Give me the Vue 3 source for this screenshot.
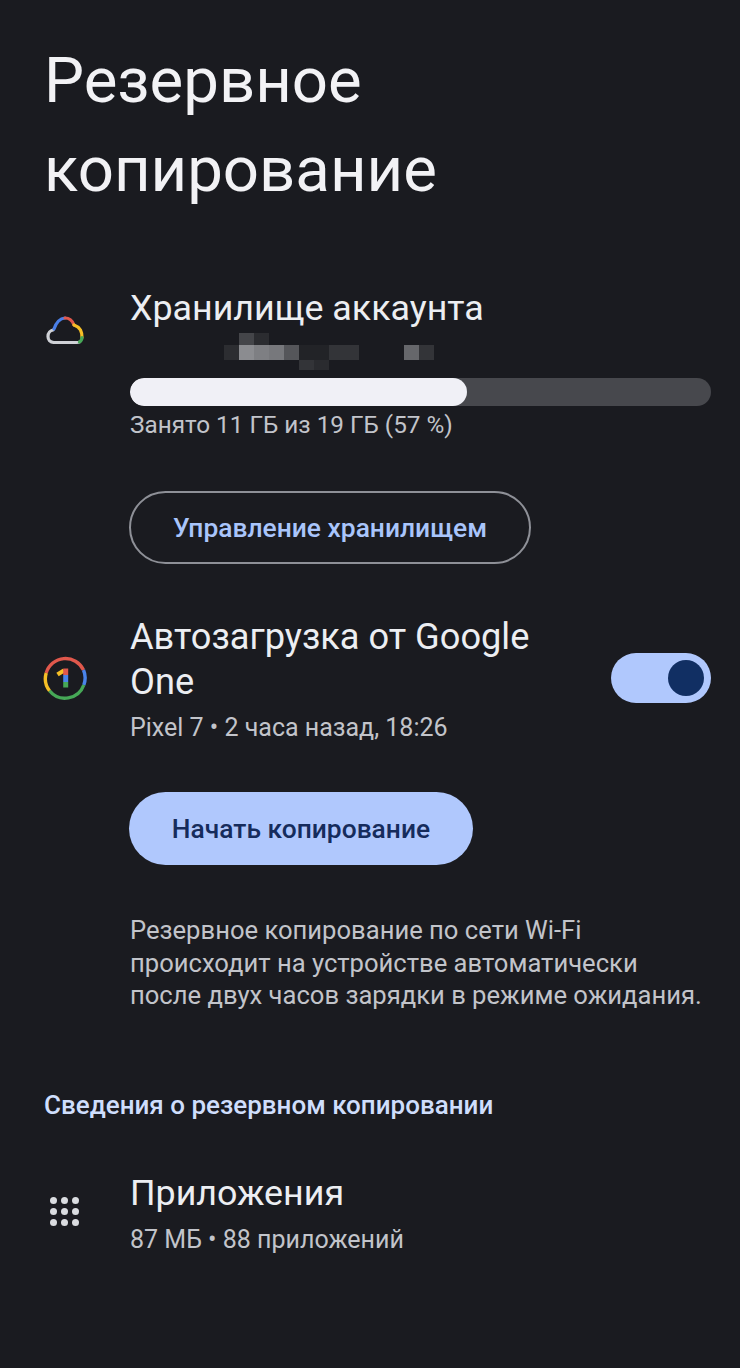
<template>
  <div class="page">
    <h1 class="title">Резервное<br />копирование</h1>

    <section class="row storage">
      <div class="icon-col">
        <svg width="38" height="30" viewBox="0 0 38 30" fill="none" stroke-width="3.2" stroke-linecap="round">
          <path d="M8 27.5 H30.5 C32 27.5 33 27.3 33.5 27" stroke="#cfd1d6" />
          <path d="M8 27.5 C4 27.5 2 24.5 2 21.5 C2 18 4.5 15.5 7 15" stroke="#cfd1d6" />
          <path d="M8 14 C10 8 14 3.5 19 3" stroke="#4a7fe8" />
          <path d="M19 3 C23.5 3 26.5 6 28 10" stroke="#e0584c" />
          <path d="M28 10 C31 11 33 12.5 34.5 15 C35.8 17.5 36 20 36 22.5" stroke="#f6bf26" />
          <path d="M36 22.5 C36 24.5 35 26 33.5 27" stroke="#46a857" />
        </svg>
      </div>
      <div class="body">
        <div class="row-title">Хранилище аккаунта</div>
        <div class="mosaic">
          <div v-for="(c, i) in mosaic" :key="i" :style="{ background: c }"></div>
        </div>
        <div class="bar"><div class="bar-fill" :style="{ width: used + '%' }"></div></div>
        <div class="sub bar-label">Занято 11 ГБ из 19 ГБ (57 %)</div>
        <button class="btn outline">Управление хранилищем</button>
      </div>
    </section>

    <section class="row backup">
      <div class="icon-col">
        <svg width="46" height="46" viewBox="0 0 46 46" fill="none" stroke-width="3.4">
          <path d="M4.2 18 A20 20 0 0 1 41.5 15" stroke="#e0584c" />
          <path d="M41.5 15 A20 20 0 0 1 41.8 30" stroke="#4a84ea" />
          <path d="M41.8 30 A20 20 0 0 1 7.5 35.8" stroke="#46a857" />
          <path d="M7.5 35.8 A20 20 0 0 1 4.2 18" stroke="#f6bf26" />
          <path d="M15.5 19.5 L22 15.5" stroke="#f6bf26" stroke-width="4.4" />
          <path d="M23.7 13.5 V20" stroke="#e0584c" stroke-width="5" />
          <path d="M23.7 20 V27" stroke="#4a84ea" stroke-width="5" />
          <path d="M23.7 27 V32.5" stroke="#46a857" stroke-width="5" />
        </svg>
      </div>
      <div class="body">
        <div class="toggle-row">
          <div>
            <div class="row-title wrap">Автозагрузка от Google One</div>
            <div class="sub below">Pixel 7 • 2 часа назад, 18:26</div>
          </div>
          <div class="toggle"><div class="knob"></div></div>
        </div>
        <button class="btn filled">Начать копирование</button>
        <p class="note">Резервное копирование по сети Wi-Fi происходит на устройстве автоматически после двух часов зарядки в режиме ожидания.</p>
      </div>
    </section>

    <div class="section-head">Сведения о резервном копировании</div>

    <section class="row apps">
      <div class="icon-col">
        <div class="dots"><span v-for="n in 9" :key="n"></span></div>
      </div>
      <div class="body">
        <div class="row-title">Приложения</div>
        <div class="sub below">87 МБ • 88 приложений</div>
      </div>
    </section>
  </div>
</template>

<script setup>
const used = 58

// blurred account e-mail, one colour per cell (3 rows of 14)
const e = 'transparent'
const mosaic = [
  e, '#444549', '#2b2c30', e, e, e, e, e, e, e, e, e, e, e,
  '#2c2d31', '#8b8c90', '#7e7f83', '#77787c', '#55565a', '#222327', '#222327', '#333438', '#333438', e, e, e, '#66676b', '#333438',
  e, e, e, e, e, '#333438', '#2a2b2f', e, e, e, e, e, e, e
]
</script>

<style>
body {
  background: #1a1b20;
}
</style>

<style scoped>
.page {
  width: 740px;
  height: 1368px;
  overflow: hidden;
  background: #1a1b20;
  color: #eceef2;
  font-family: Roboto, "Noto Sans", sans-serif;
  box-sizing: border-box;
  padding-top: 36px;
}

.title {
  margin: 0 0 0 44px;
  font-size: 63.5px;
  line-height: 89px;
  font-weight: 400;
  color: #f2f2f5;
}

.row {
  display: flex;
}

.icon-col {
  width: 130px;
  flex: none;
  display: flex;
  justify-content: center;
  align-items: flex-start;
  box-sizing: border-box;
}

.body {
  flex: 1;
  padding-right: 29px;
}

.storage {
  margin-top: 72px;
}

.storage .icon-col {
  padding-top: 29px;
  padding-right: 1px;
}

.row-title {
  font-size: 35.8px;
  line-height: 45px;
  color: #eceef2;
}

.wrap {
  width: 430px;
  font-size: 36.2px;
}

.sub {
  font-size: 25px;
  line-height: 32px;
  color: #c2c4ca;
}

.below {
  margin-top: 8px;
}

.mosaic {
  display: grid;
  grid-template-columns: repeat(14, 15px);
  grid-template-rows: 12px 15px 10px;
  margin: 2px 0 8px 94px;
  height: 37px;
}

.bar {
  height: 28px;
  border-radius: 14px;
  background: #47484d;
  overflow: hidden;
}

.bar-fill {
  height: 100%;
  border-radius: 14px;
  background: #f0f0f6;
}

.bar-label {
  margin-top: 3px;
  font-size: 24.3px;
}

.btn {
  display: block;
  height: 73px;
  margin-left: -1px;
  border-radius: 37px;
  font-family: inherit;
  font-size: 26.4px;
  font-weight: 500;
  box-sizing: border-box;
  padding: 0;
}

.outline {
  width: 402px;
  margin-top: 50px;
  background: none;
  border: 2px solid #8e9097;
  color: #a9c5fb;
}

.filled {
  width: 344px;
  margin-top: 48px;
  background: #b0c8fd;
  border: none;
  color: #162c5c;
}

.backup {
  margin-top: 50px;
}

.backup .icon-col {
  padding-top: 41px;
}

.toggle-row {
  display: flex;
  justify-content: space-between;
  align-items: center;
}

.toggle {
  width: 100px;
  height: 50px;
  margin-top: -2px;
  border-radius: 25px;
  background: #b0c8fd;
  display: flex;
  justify-content: flex-end;
  align-items: center;
  padding-right: 7px;
  box-sizing: border-box;
  flex: none;
}

.knob {
  width: 36px;
  height: 36px;
  border-radius: 50%;
  background: #112f63;
}

.note {
  margin: 49px 0 0;
  max-width: 572px;
  font-size: 25.6px;
  line-height: 32.5px;
  color: #c2c4ca;
}

.section-head {
  margin: 77px 0 0 44px;
  font-size: 26px;
  line-height: 32px;
  font-weight: 500;
  color: #cfdefc;
}

.apps {
  margin-top: 50px;
}

.apps .icon-col {
  padding-top: 26px;
  padding-right: 1px;
}

.dots {
  display: grid;
  grid-template-columns: repeat(3, 7px);
  grid-auto-rows: 7px;
  gap: 4px;
}

.dots span {
  border-radius: 50%;
  background: #dadce0;
}
</style>
